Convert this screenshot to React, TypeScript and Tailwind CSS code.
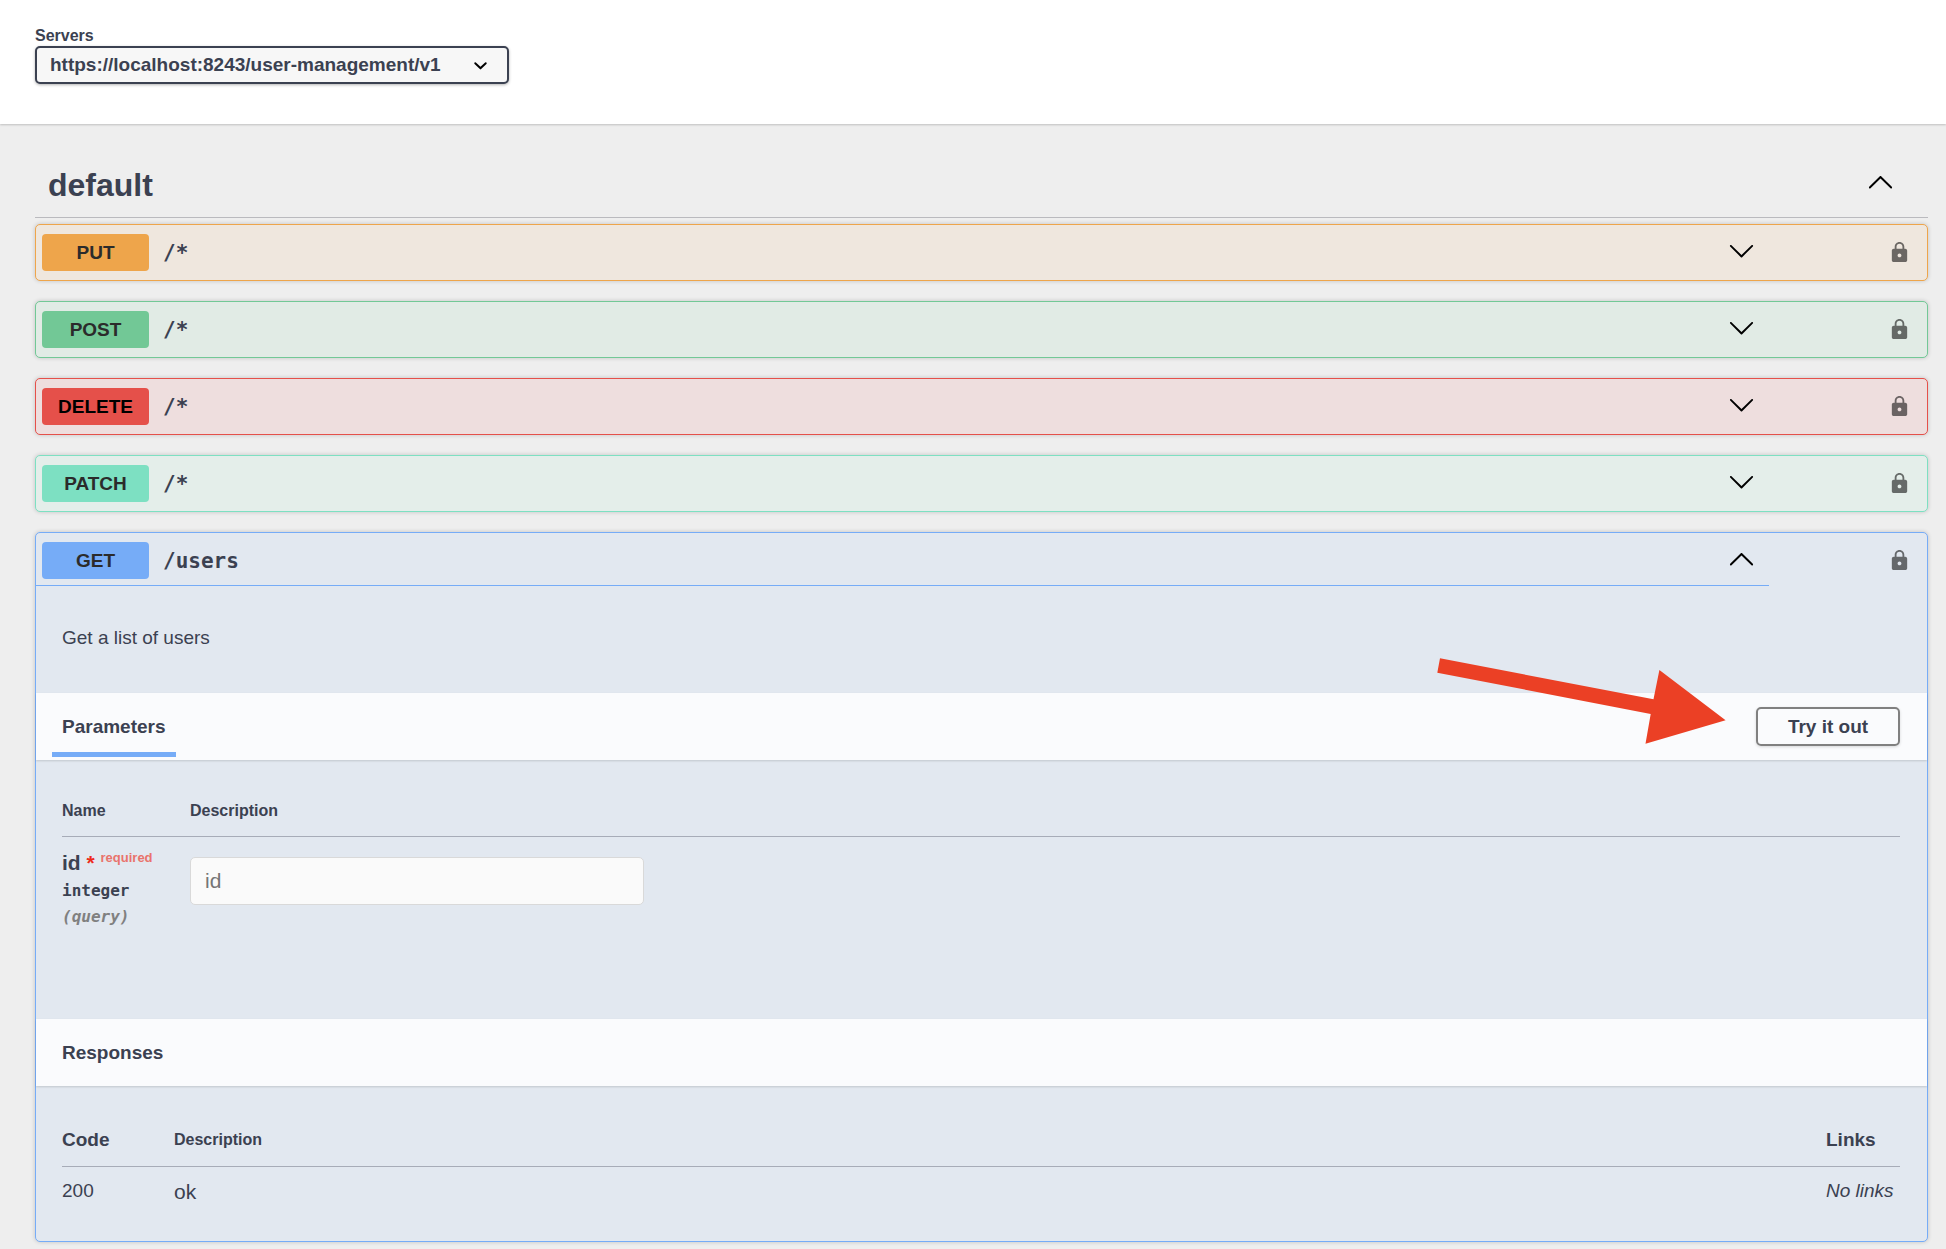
import { useState } from "react";
import clsx from "clsx";

interface Operation {
  method: string;
  path: string;
  block: string;
  badge: string;
}

const operations: Operation[] = [
  {
    method: "PUT",
    path: "/*",
    block: "border-[#eea54b] bg-[#efe7de]",
    badge: "bg-[#eea54b] text-[#2b2b2b]",
  },
  {
    method: "POST",
    path: "/*",
    block: "border-[#72c896] bg-[#e1ebe5]",
    badge: "bg-[#72c896] text-[#2b2b2b]",
  },
  {
    method: "DELETE",
    path: "/*",
    block: "border-[#e5504a] bg-[#eedede]",
    badge: "bg-[#e5504a] text-black",
  },
  {
    method: "PATCH",
    path: "/*",
    block: "border-[#7de0c2] bg-[#e4eeea]",
    badge: "bg-[#7de0c2] text-[#2b2b2b]",
  },
  {
    method: "GET",
    path: "/users",
    block: "border-[#76acf7] bg-[#e2e8f0]",
    badge: "bg-[#76acf7] text-[#2b2b2b]",
  },
];

function Chevron({ up }: { up?: boolean }) {
  return (
    <svg
      viewBox="0 0 20 20"
      className="mt-[3px] size-[27px] shrink-0 self-start fill-black"
      aria-hidden="true"
    >
      {up ? (
        <path d="M17.418 14.908c.272.268.709.268.979 0s.271-.701 0-.969l-7.908-7.83c-.27-.268-.707-.268-.979 0l-7.908 7.83c-.27.268-.27.701 0 .969.271.268.709.268.98 0L10 7.767l7.418 7.141z" />
      ) : (
        <path d="M17.418 6.109c.272-.268.709-.268.979 0s.271.701 0 .969l-7.908 7.83c-.27.268-.707.268-.979 0l-7.908-7.83c-.27-.268-.27-.701 0-.969.271-.268.709-.268.979 0L10 13.25l7.418-7.141z" />
      )}
    </svg>
  );
}

function Lock() {
  return (
    <svg
      viewBox="0 0 24 24"
      className="size-[23px] fill-black opacity-55"
      aria-hidden="true"
    >
      <path d="M18 8h-1V6c0-2.76-2.24-5-5-5S7 3.24 7 6v2H6c-1.1 0-2 .9-2 2v10c0 1.1.9 2 2 2h12c1.1 0 2-.9 2-2V10c0-1.1-.9-2-2-2zm-6 9c-1.1 0-2-.9-2-2s.9-2 2-2 2 .9 2 2-.9 2-2 2zm3.1-9H8.9V6c0-1.71 1.39-3.1 3.1-3.1 1.71 0 3.1 1.39 3.1 3.1v2z" />
    </svg>
  );
}

function OperationSummary({
  operation,
  open,
}: {
  operation: Operation;
  open?: boolean;
}) {
  return (
    <div className="flex items-start">
      <button
        type="button"
        aria-expanded={!!open}
        className={clsx(
          "flex flex-1 items-center pt-[9px] pr-3.5 pl-1.5 text-left",
          open ? "border-b border-[#76acf7] pb-1.5" : "pb-[9px]"
        )}
      >
        <span
          className={clsx(
            "flex h-[37px] w-[107px] items-center justify-center rounded pt-0.5 text-[19px] font-bold",
            operation.badge
          )}
        >
          {operation.method}
        </span>
        <span className="ml-3.5 flex-1 pt-0.5 font-['DejaVu_Sans_Mono',monospace] text-[21px] font-bold">
          {operation.path}
        </span>
        <Chevron up={open} />
      </button>
      <button
        type="button"
        aria-label={`Authorize ${operation.method} ${operation.path}`}
        className="flex w-[158px] justify-end pt-4 pr-4"
      >
        <Lock />
      </button>
    </div>
  );
}

function ParametersTable() {
  const [id, setId] = useState("");

  return (
    <div className="pt-[41px] pr-[27px] pb-[89px] pl-[26px]">
      <table className="w-full table-fixed text-left">
        <thead>
          <tr className="border-b border-[#a7acb8] text-base leading-5">
            <th className="w-32 pb-[15px]">Name</th>
            <th className="pb-[15px]">Description</th>
          </tr>
        </thead>
        <tbody>
          <tr className="align-top">
            <td className="pt-3 whitespace-nowrap">
              <div className="text-[21px] leading-7 font-bold">
                <label htmlFor="param-id">id</label>{" "}
                <span className="text-[#ee2b1c]">*</span>{" "}
                <sup className="-top-2 text-[13px] text-[#e9736c]">
                  required
                </sup>
              </div>
              <div className="mt-px font-['DejaVu_Sans_Mono',monospace] text-base leading-[26px] font-bold">
                integer
              </div>
              <div className="font-['DejaVu_Sans_Mono',monospace] text-base leading-[26px] font-bold text-[#808080] italic">
                (query)
              </div>
            </td>
            <td className="pt-5">
              <input
                id="param-id"
                type="text"
                placeholder="id"
                value={id}
                onChange={(e) => setId(e.target.value)}
                className="block h-12 w-full max-w-[454px] rounded-[5px] border border-[#d9d9d9] bg-[#fafafa] px-3.5 text-[21px] placeholder:text-[#757575]"
              />
            </td>
          </tr>
        </tbody>
      </table>
    </div>
  );
}

function ResponsesTable() {
  return (
    <div className="pt-[42px] pr-[27px] pb-[35px] pl-[26px]">
      <table className="w-full table-fixed text-left text-[19px] leading-6">
        <thead>
          <tr className="border-b border-[#a7acb8] align-top">
            <th className="w-28 pb-3.5">Code</th>
            <th className="pb-3.5 text-base leading-6">Description</th>
            <th className="w-[74px] pb-3.5">Links</th>
          </tr>
        </thead>
        <tbody>
          <tr className="align-top">
            <td className="pt-3">200</td>
            <td className="pt-[11px] text-[21px] leading-7">ok</td>
            <td className="pt-3 whitespace-nowrap italic">No links</td>
          </tr>
        </tbody>
      </table>
    </div>
  );
}

export default function App() {
  return (
    <div className="min-h-screen bg-[#eeeeee] font-['Liberation_Sans',Arial,sans-serif] text-[#3b4151]">
      <header className="bg-white pt-[26px] pr-[18px] pb-10 pl-[35px] shadow-[0_1px_2px_rgba(0,0,0,0.2)]">
        <label
          htmlFor="servers"
          className="block text-base leading-5 font-bold"
        >
          Servers
        </label>
        <div className="relative w-full max-w-[474px]">
          <select
            id="servers"
            className="block h-[38px] w-full appearance-none rounded-[5px] border-2 border-[#3b4151] bg-[#f7f7f7] pr-10 pl-[13px] text-[19px] font-bold shadow-[0_1px_3px_rgba(0,0,0,0.3)]"
          >
            <option>https://localhost:8243/user-management/v1</option>
          </select>
          <svg
            viewBox="0 0 20 20"
            className="pointer-events-none absolute top-1.5 right-[15px] size-[27px] fill-black"
            aria-hidden="true"
          >
            <path d="M13.418 7.859a.695.695 0 0 1 .978 0 .68.68 0 0 1 0 .969l-3.908 3.83a.697.697 0 0 1-.979 0l-3.908-3.83a.68.68 0 0 1 0-.969.695.695 0 0 1 .978 0L10 11l3.418-3.141z" />
          </svg>
        </div>
      </header>

      <main className="pt-[41px] pr-[18px] pl-[35px]">
        <button
          type="button"
          aria-expanded="true"
          className="flex w-full items-center justify-between border-b border-[#bababe] pr-[34px] pb-3 pl-[13px]"
        >
          <h3 className="text-[32px] leading-10 font-bold">default</h3>
          <Chevron up />
        </button>

        <div className="mt-1.5 flex flex-col gap-5">
          {operations.map((operation) => {
            const open = operation.method === "GET";
            return (
              <section
                key={operation.method}
                className={clsx(
                  "rounded-[5px] border shadow-[0_0_4px_rgba(0,0,0,0.19)]",
                  operation.block
                )}
              >
                <OperationSummary operation={operation} open={open} />
                {open && (
                  <>
                    <p className="px-[26px] pt-10 pb-[43px] text-[19px] leading-6">
                      Get a list of users
                    </p>

                    <div className="relative flex h-[67px] items-center justify-between bg-[#fafbfd] pr-[27px] pl-4 shadow-[0_1px_2px_rgba(0,0,0,0.15)]">
                      <h4 className="mb-[3px] self-end border-b-5 border-[#76acf7] px-2.5 pb-[13px] text-[19px] leading-6 font-bold">
                        Parameters
                      </h4>
                      <button
                        type="button"
                        className="h-[39px] w-36 rounded-[5px] border-2 border-[#808080] pt-px text-[19px] font-bold shadow-[0_1px_3px_rgba(0,0,0,0.15)]"
                      >
                        Try it out
                      </button>
                      {/* Pointer to the button, drawn over the panel */}
                      <svg
                        viewBox="0 0 289 86"
                        className="pointer-events-none absolute -top-[35px] right-[201px] h-[86px] w-[289px]"
                        aria-hidden="true"
                      >
                        <path
                          d="M3 0.3 216.5 41.3 222.4 12 288.6 62.3 208.5 85.7 213.7 56 0.3 14.7z"
                          fill="#eb4025"
                        />
                      </svg>
                    </div>
                    <ParametersTable />

                    <div className="flex h-[67px] items-center bg-[#fafbfd] px-[26px] shadow-[0_1px_2px_rgba(0,0,0,0.15)]">
                      <h4 className="text-[19px] leading-6 font-bold">
                        Responses
                      </h4>
                    </div>
                    <ResponsesTable />
                  </>
                )}
              </section>
            );
          })}
        </div>
      </main>
    </div>
  );
}
